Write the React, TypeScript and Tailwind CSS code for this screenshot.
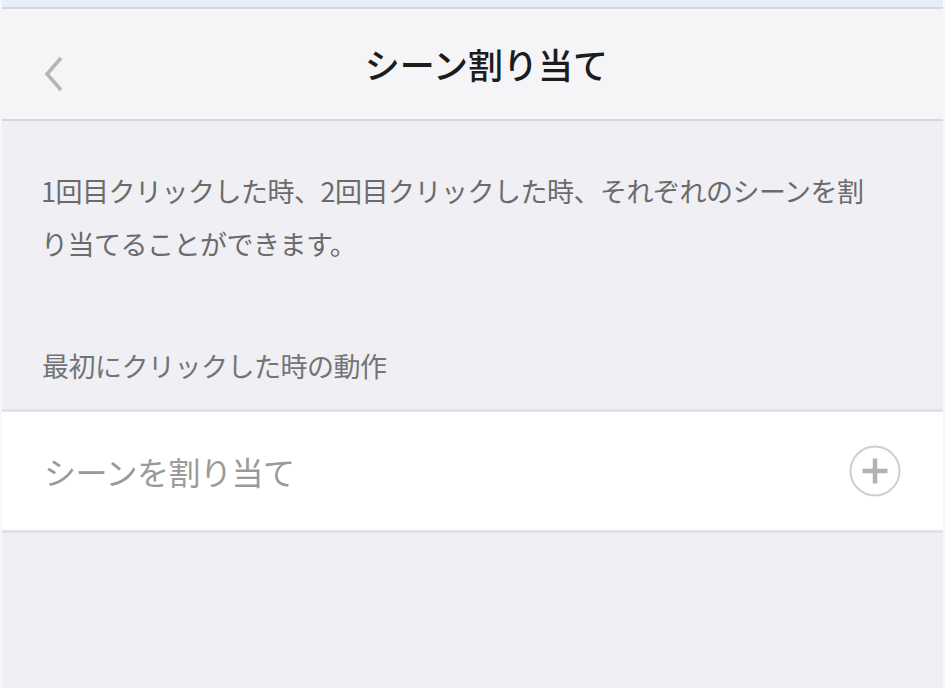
import React from "react";

const font = { fontFamily: '"Noto Sans CJK JP", "Noto Sans", sans-serif' };

function PlusCircle() {
  return (
    <svg width="54" height="54" viewBox="0 0 54 54" fill="none">
      <circle cx="27" cy="27" r="24.5" stroke="#cfcfcf" strokeWidth="2" />
      <path d="M27 14.5v25M14.5 27h25" stroke="#b2b2b2" strokeWidth="4.5" />
    </svg>
  );
}

export default function App() {
  return (
    <div
      className="w-[945px] h-[688px] bg-[#efeff4] flex flex-col overflow-hidden border-x-2 border-[#f7f7fa]"
      style={font}
    >
      <div className="h-[7px] bg-[#e7eef7]" />
      <div className="h-[114px] bg-[#f5f5f7] border-y-2 border-[#d6d7da] flex items-center relative">
        <button className="absolute left-[40px] top-[46px]">
          <svg width="24" height="38" viewBox="0 0 24 38" fill="none">
            <path d="M19 3L5 19l14 16" stroke="#b5b5b5" strokeWidth="3.5" />
          </svg>
        </button>
        <h1 className="w-full text-center text-[35px] font-medium text-[#1c1c1c] pl-[28px]">
          シーン割り当て
        </h1>
      </div>

      <p className="pl-[39px] pr-[62px] pt-[43px] text-[27px] leading-[53px] text-[#6b6b6b] tracking-[-0.5px]">
        1回目クリックした時、2回目クリックした時、それぞれのシーンを割り当てることができます。
      </p>

      <div className="px-[40px] pt-[76px] pb-[22px] text-[27px] text-[#747474] tracking-[-0.5px]">
        最初にクリックした時の動作
      </div>

      <div className="h-[124px] bg-white border-y-[3px] border-[#e2e2e5] flex items-center justify-between pl-[42px] pr-[41px]">
        <span className="text-[32px] text-[#9a9a9a] tracking-[-0.5px]">シーンを割り当て</span>
        <PlusCircle />
      </div>
    </div>
  );
}
